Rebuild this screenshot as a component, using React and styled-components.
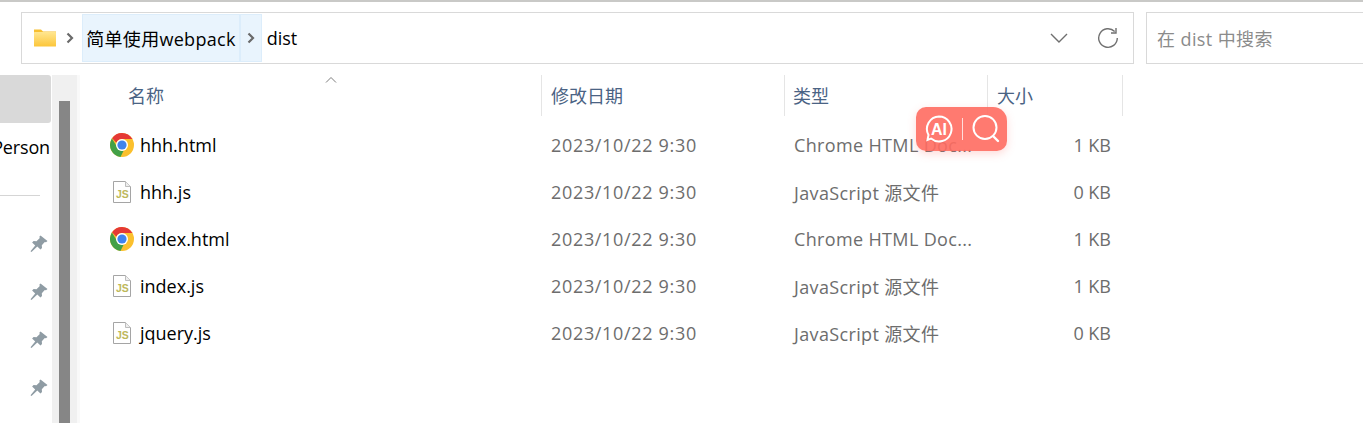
import React from "react";
import styled, { createGlobalStyle } from "styled-components";

const FONT = `"Open Sans", "Noto Sans", "Noto Sans CJK SC", sans-serif`;

const Global = createGlobalStyle`
  html, body { margin: 0; padding: 0; background: #fff; height: 100%; overflow: hidden; }
  #root { height: 100%; }
  * { box-sizing: border-box; }
`;

const Page = styled.div`
  width: 1363px; height: 423px; position: relative; overflow: hidden;
  background: #fff; font-family: ${FONT}; font-size: 18px; color: #000;
  border-top: 2px solid #c9c9c7;
`;
const AddressRow = styled.div`
  display: flex; gap: 12px; padding: 10px 0 0 21px; height: 73px;
`;
const AddressBar = styled.div`
  width: 1113px; height: 52px; border: 1px solid #d9d9d9; display: flex; align-items: center; padding: 1px 0 1px 11px;
`;
const Crumbs = styled.div`
  flex: 1; height: 100%; display: flex; align-items: stretch;
`;
const Crumb = styled.div`
  display: flex; align-items: center; justify-content: center;
  width: ${p => p.$w}px; height: 100%;
  padding-bottom: ${p => p.$pb || 0}px;
  background: ${p => (p.$hot ? "#e9f4fd" : "transparent")};
  ${p => p.$hot ? "box-shadow: inset 0 0 0 1px #dcedfb;" : ""}
  white-space: nowrap; font-size: 18px; letter-spacing: ${p => p.$ls || 0}px;
`;
const BarTools = styled.div`
  display: flex; align-items: center; gap: 29px; padding-right: 14px; color: #6b6b6b;
`;
const SearchBox = styled.div`
  flex: 1; height: 52px; border: 1px solid #d9d9d9; border-right: none;
  display: flex; align-items: center; padding: 0 0 1px 10px; color: #8b8b8b; font-size: 18px; letter-spacing: .4px;
`;
const Body = styled.div`
  display: flex; height: 348px;
`;
const Sidebar = styled.div`
  width: 52px; flex: none; display: flex; flex-direction: column; overflow: hidden;
`;
const NavSelected = styled.div`
  width: 51px; height: 48px; flex: none; background: #d9d9d9; border-radius: 0 3px 3px 0;
`;
const NavText = styled.div`
  width: 50px; height: 48px; flex: none; display: flex; align-items: center; justify-content: flex-end;
  white-space: nowrap; font-size: 18px; letter-spacing: -.15px;
`;
const NavRule = styled.div`
  width: 40px; height: 1px; flex: none; background: #d5d5d5;
`;
const NavPin = styled.div`
  width: 48px; height: 48px; flex: none; display: flex; align-items: center; justify-content: flex-end;
`;
const PinSpacer = styled.div`height: ${p => p.$h}px; flex: none;`;
const Track = styled.div`
  width: 25px; flex: none; background: #f0f0f0; padding: 26px 7px 0 7px;
`;
const Thumb = styled.div`
  width: 11px; height: 100%; background: #868686;
`;
const Gutter = styled.div`
  width: 3px; flex: none; background: #f9f9f9;
`;
const List = styled.div`
  flex: 1; display: flex; flex-direction: column; position: relative; background: #fff;
`;
const Sort = styled.svg`
  position: absolute; left: 245px; top: 1px;
`;
const Columns = styled.div`
  display: grid; grid-template-columns: 462px 243px 203px 135px; height: 46px;
`;
const Head = styled.div`
  display: flex; align-items: center; height: 41px; color: #4a6384; font-size: 18px;
  padding-left: ${p => p.$pl}px; padding-bottom: 2px;
  border-right: 1px solid #e5e5e5;
  white-space: nowrap;
`;
const Row = styled.div`
  display: grid; grid-template-columns: 461px 244px 202px 124px; height: 47px; align-items: center;
`;
const NameCell = styled.div`
  display: flex; align-items: center; padding-left: 30px; gap: 6px; color: #000; font-size: 18px; white-space: nowrap;
`;
const IconBox = styled.span`
  width: 24px; height: 24px; display: flex; align-items: center; justify-content: center; flex: none;
`;
const Meta = styled.div`
  color: #6d6d6d; font-size: 18px; white-space: nowrap; padding-left: ${p => p.$pl || 0}px;
  text-align: ${p => p.$right ? "right" : "left"}; overflow: hidden;
  letter-spacing: ${p => p.$ls || 0}px;
`;
const Badge = styled.div`
  position: absolute; left: 916px; top: 105px; width: 91px; height: 44px; border-radius: 10px 14px 10px 10px;
  background: rgba(255, 108, 96, 0.9); box-shadow: 0 3px 8px rgba(255, 113, 102, 0.25);
  display: flex; align-items: center; padding-left: 8px;
`;
const BadgeRule = styled.div`
  width: 1px; height: 22px; background: rgba(255,255,255,.75); margin: 0 8px 0 8px;
`;

const Folder = () => (
  <svg width="24" height="18" viewBox="0 0 24 18">
    <defs>
      <linearGradient id="fg" x1="0" y1="0" x2="0" y2="1">
        <stop offset="0" stopColor="#ffe690" />
        <stop offset="1" stopColor="#fcc63a" />
      </linearGradient>
    </defs>
    <path d="M1 .5h7l2 2h13v4H1z" fill="#f7bf30" />
    <rect x="1" y="3" width="22" height="14.5" fill="url(#fg)" rx=".5" />
  </svg>
);
const Chevron = () => (
  <svg width="8" height="12" viewBox="0 0 8 12"><path d="M1.5 1.5l4.5 4.5-4.5 4.5" fill="none" stroke="#6a6a6a" strokeWidth="2.2" /></svg>
);
const Down = () => (
  <svg width="18" height="10" viewBox="0 0 18 10"><path d="M1 1l8 8 8-8" fill="none" stroke="#6f6f6f" strokeWidth="1.4" /></svg>
);
const Refresh = () => (
  <svg width="22" height="22" viewBox="0 0 22 22">
    <path d="M17.7 4.6A9.3 9.3 0 1 0 20.3 11" fill="none" stroke="#707070" strokeWidth="1.4" />
    <path d="M19 1v5h-5" fill="none" stroke="#707070" strokeWidth="1.4" />
  </svg>
);
const Pin = () => (
  <svg width="18" height="18" viewBox="0 0 18 18">
    <path d="M10.5 .5l7 5.500-1.500 1.300-1.200-.4-3 3.400.2 2.800-1.500 1.500-3.200-3.200L1.500 17l-1-.8 4.700-5.700-3.100-3.100 1.500-1.500 2.900.3L9.800 3l-.5-1.200z" fill="#8f9ca4" />
  </svg>
);
const Chrome = () => (
  <svg width="24" height="24" viewBox="0 0 24 24">
    <circle cx="12" cy="12" r="12" fill="#fbc02d" />
    <path d="M12 0a12 12 0 0 1 10.4 6H12a6 6 0 0 0-5.600 3.800L2.100 5.200A12 12 0 0 1 12 0z" fill="#e53935" />
    <path d="M1.900 5.500L7 13.800a6 6 0 0 0 6.600 4l-3.100 6.100A12 12 0 0 1 1.900 5.500z" fill="#43a047" />
    <circle cx="12" cy="12" r="6" fill="#fff" />
    <circle cx="12" cy="12" r="4.600" fill="#3f83ee" />
  </svg>
);
const JsFile = () => (
  <svg width="18" height="22" viewBox="0 0 18 22">
    <path d="M.5.5h12l5 5v16H.5z" fill="#fff" stroke="#a5a5a5" />
    <path d="M12.500.5v5h5" fill="#eee" stroke="#bdbdbd" />
    <text x="3" y="16.500" fontFamily="'Liberation Sans', sans-serif" fontSize="10.500" fontWeight="700" fill="#bdb85a">JS</text>
  </svg>
);
const AiIcon = () => (
  <svg width="30" height="30" viewBox="0 0 30 30">
    <path d="M15 2.500a12.500 12.500 0 1 1-8 22.100L3.500 26l1-5A12.500 12.500 0 0 1 15 2.500z" fill="none" stroke="#fff" strokeWidth="2" />
    <text x="15" y="21" textAnchor="middle" fontFamily="'Liberation Sans', sans-serif" fontWeight="700" fontSize="16" fill="#fff">AI</text>
  </svg>
);
const SearchIcon = () => (
  <svg width="30" height="30" viewBox="0 0 30 30">
    <circle cx="14" cy="13.500" r="11.500" fill="none" stroke="#fff" strokeWidth="2" />
    <path d="M22 22l5 5" stroke="#fff" strokeWidth="2.400" strokeLinecap="round" />
  </svg>
);

const files = [
  { name: "hhh.html", kind: "chrome", type: "Chrome HTML Doc...", size: "1 KB" },
  { name: "hhh.js", kind: "js", type: "JavaScript 源文件", size: "0 KB" },
  { name: "index.html", kind: "chrome", type: "Chrome HTML Doc...", size: "1 KB" },
  { name: "index.js", kind: "js", type: "JavaScript 源文件", size: "1 KB" },
  { name: "jquery.js", kind: "js", type: "JavaScript 源文件", size: "0 KB" },
];

export default function App() {
  return (
    <Page>
      <Global />
      <AddressRow>
        <AddressBar>
          <Crumbs>
            <Crumb $w={24}><Folder /></Crumb>
            <Crumb $w={25}><Chevron /></Crumb>
            <Crumb $w={158} $hot $ls={0.3} $pb={1}>简单使用webpack</Crumb>
            <Crumb $w={22} $hot><Chevron /></Crumb>
            <Crumb $w={40}>dist</Crumb>
          </Crumbs>
          <BarTools>
            <Down />
            <Refresh />
          </BarTools>
        </AddressBar>
        <SearchBox>在 dist 中搜索</SearchBox>
      </AddressRow>
      <Body>
        <Sidebar>
          <NavSelected />
          <NavText>Person</NavText>
          <PinSpacer $h={24} />
          <NavRule />
          <PinSpacer $h={24} />
          <NavPin><Pin /></NavPin>
          <NavPin><Pin /></NavPin>
          <NavPin><Pin /></NavPin>
          <NavPin><Pin /></NavPin>
        </Sidebar>
        <Track><Thumb /></Track>
        <Gutter />
        <List>
          <Sort width="12" height="8" viewBox="0 0 12 8"><path d="M1 6.500l5-5 5 5" fill="none" stroke="#7d7d7d" /></Sort>
          <Columns>
            <Head $pl={48}>名称</Head>
            <Head $pl={9}>修改日期</Head>
            <Head $pl={8}>类型</Head>
            <Head $pl={9}>大小</Head>
          </Columns>
          {files.map(f => (
            <Row key={f.name}>
              <NameCell>
                <IconBox>{f.kind === "chrome" ? <Chrome /> : <JsFile />}</IconBox>
                {f.name}
              </NameCell>
              <Meta $pl={10} $ls={0.67}>2023/10/22 9:30</Meta>
              <Meta $pl={9} $ls={0.35}>{f.type}</Meta>
              <Meta $right>{f.size}</Meta>
            </Row>
          ))}
        </List>
      </Body>
      <Badge>
        <AiIcon />
        <BadgeRule />
        <SearchIcon />
      </Badge>
    </Page>
  );
}
